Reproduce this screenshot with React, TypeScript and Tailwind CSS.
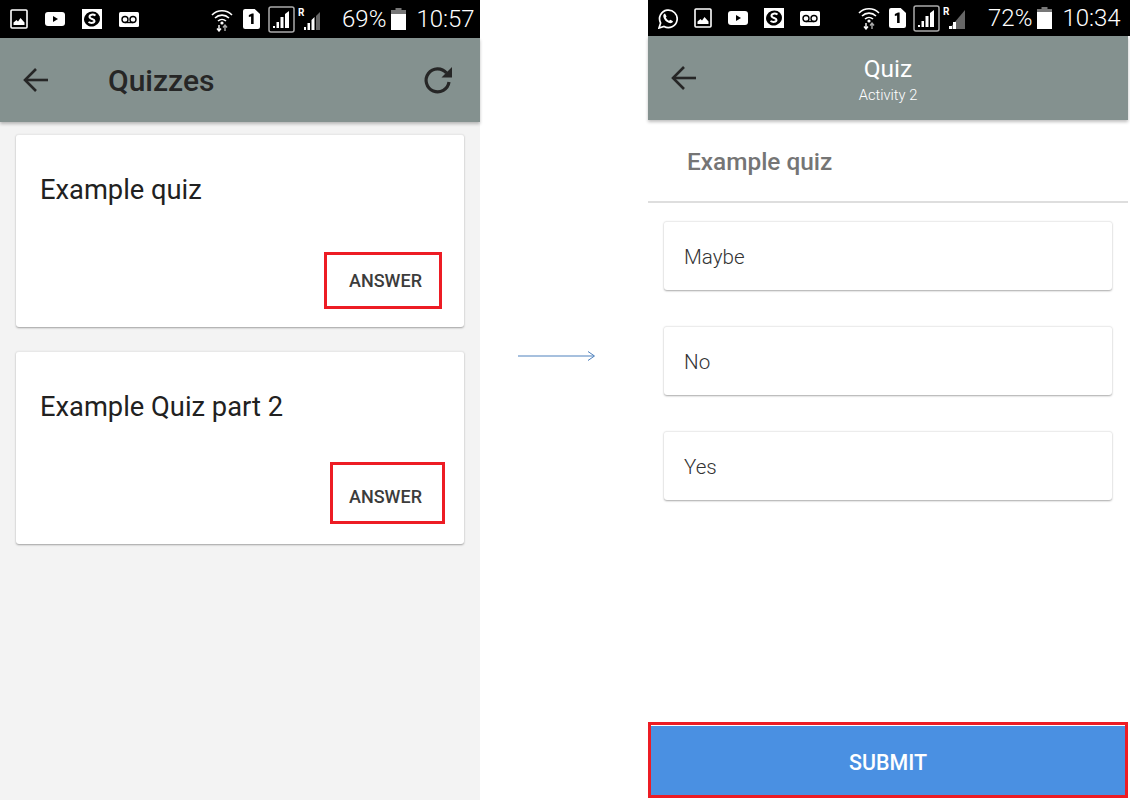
// App.tsx
import React from 'react'

const PictureIcon = () => (
  <svg width="18" height="20" viewBox="0 0 18 20">
    <rect x="1" y="1" width="16" height="18" rx="1" fill="#000" stroke="#fff" strokeWidth="1.6" />
    <path d="M3.5 16 L3.5 13.5 L6.5 11 L8 12.5 L10.5 9 L14.5 13.5 L14.5 16 Z" fill="#fff" />
  </svg>
)

const PlayIcon = () => (
  <svg width="20" height="14" viewBox="0 0 20 14">
    <rect x="0" y="0" width="20" height="14" rx="3" fill="#fff" />
    <path d="M8 4 L13 7 L8 10 Z" fill="#000" />
  </svg>
)

const SkypeIcon = () => (
  <svg width="20" height="20" viewBox="0 0 20 20">
    <rect width="20" height="20" fill="#fff" />
    <ellipse cx="10" cy="10" rx="8" ry="7.5" fill="#000" transform="rotate(-20 10 10)" />
    <path d="M13.5 6.5 C11 4.8 7.5 5.5 7.5 7.8 C7.5 10.5 12.5 9.5 12.5 12 C12.5 14 9 14.5 6.5 13" fill="none" stroke="#fff" strokeWidth="2" />
  </svg>
)

const VoicemailIcon = () => (
  <svg width="20" height="15" viewBox="0 0 20 15">
    <rect width="20" height="15" rx="1.5" fill="#fff" />
    <circle cx="6" cy="7.5" r="3" fill="none" stroke="#000" strokeWidth="1.4" />
    <circle cx="14" cy="7.5" r="3" fill="none" stroke="#000" strokeWidth="1.4" />
    <path d="M6 10.5 H14" stroke="#000" strokeWidth="1.4" />
  </svg>
)

const WhatsappIcon = () => (
  <svg width="20" height="21" viewBox="0 0 20 21">
    <path d="M1 20 L2.6 15 A8.8 8.8 0 1 1 6 18.5 Z" fill="none" stroke="#fff" strokeWidth="1.7" />
    <path d="M7 5.5 L8.6 8.4 L7.8 9.6 C8.6 11.2 9.6 12.2 11 12.8 L12.4 11.8 L15 13.2 C14.4 15.2 12.6 15.6 10.6 14.8 C8 13.8 6 11.6 5.4 9 C5 7.4 5.6 6 7 5.5 Z" fill="#fff" />
  </svg>
)

const WifiIcon = () => (
  <svg width="22" height="24" viewBox="0 0 22 24">
    <path d="M1 7 A14 14 0 0 1 21 7" fill="none" stroke="#fff" strokeWidth="1.6" />
    <path d="M4 10 A10 10 0 0 1 18 10" fill="none" stroke="#fff" strokeWidth="1.6" />
    <path d="M7 13 A6 6 0 0 1 15 13" fill="none" stroke="#fff" strokeWidth="1.6" />
    <circle cx="11" cy="15" r="1.6" fill="#fff" />
    <path d="M8 17 V23 M6 20.5 L8 23 L10 20.5" fill="none" stroke="#fff" strokeWidth="1.4" />
    <path d="M14 23 V17 M12 19.5 L14 17 L16 19.5" fill="none" stroke="#aaa" strokeWidth="1.4" />
  </svg>
)

const SimIcon = () => (
  <svg width="17" height="20" viewBox="0 0 16 20" preserveAspectRatio="none">
    <path d="M0 2 Q0 0 2 0 L11 0 L16 5 L16 18 Q16 20 14 20 L2 20 Q0 20 0 18 Z" fill="#fff" />
    <path d="M5.5 6 L8.5 4.5 L10 4.5 L10 15 L7.6 15 L7.6 7.5 L5.5 8 Z" fill="#000" />
  </svg>
)

const BoxedSignal = () => (
  <svg width="27" height="27" viewBox="0 0 27 27">
    <rect x="1" y="1" width="25" height="25" rx="2" fill="#000" stroke="#aaa" strokeWidth="1.5" />
    <path d="M5 22 H7 V20 H5 Z M8.5 22 H11 V16 H8.5 Z M12.5 22 H15.5 V11 H12.5 Z M17 22 H21 V5 L17 8 Z" fill="#fff" />
  </svg>
)

const RoamingSignal = ({ bars = 2 }: { bars?: number }) => (
  <svg width="24" height="24" viewBox="0 0 24 24">
    <text x="0" y="9" fill="#fff" fontSize="10" fontWeight="700" fontFamily="Roboto, sans-serif">R</text>
    {bars > 1 ? (
      <>
        <path d="M18 23 H22 V5 L18 9 Z" fill="#666" />
        <path d="M6 23 H8 V20 H6 Z M9.5 23 H12 V16 H9.5 Z M13.5 23 H16.5 V10 L13.5 13 Z" fill="#fff" />
      </>
    ) : (
      <>
        <path d="M22 4 L22 23 L6 23 Z" fill="#666" />
        <path d="M6 23 H9 V20 H6 Z M10 23 H13 V16 H10 Z" fill="#fff" />
      </>
    )}
  </svg>
)

const BatteryIcon = ({ level }: { level: number }) => (
  <svg width="15" height="22" viewBox="0 0 15 22">
    <path d="M4.5 0 H10.5 V2 H15 V22 H0 V2 H4.5 Z" fill="#777" />
    <path d={`M0 ${22 - level} H15 V22 H0 Z`} fill="#fff" />
  </svg>
)

const BackArrow = () => (
  <svg width="26" height="24" viewBox="0 0 26 24" fill="none" stroke="#262626" strokeWidth="2.6">
    <path d="M25 12 H2" />
    <path d="M13 1 L2 12 L13 23" />
  </svg>
)

const RefreshIcon = () => (
  <svg width="30" height="30" viewBox="0 0 30 30" fill="none">
    <path d="M23.5 8 A11.5 11.5 0 1 0 26 17" stroke="#262626" strokeWidth="3.2" />
    <path d="M29 2 V12.5 H18.5 Z" fill="#262626" />
  </svg>
)

const Answer = ({ className }: { className: string }) => (
  <button className={`flex items-center justify-center border-[3px] border-[#ed1c24] text-[18px] font-medium text-[#3c3c3c] ${className}`}>
    ANSWER
  </button>
)

const QuizCard = ({ title, buttonClass, titleClass }: { title: string; buttonClass: string; titleClass: string }) => (
  <div className="mx-4 flex h-[193px] flex-col rounded-[3px] border-t border-[#e8e8e8] bg-white shadow-[0_1px_2px_rgba(0,0,0,0.35)]">
    <div className={`pl-6 text-[27.3px] leading-[32px] text-[#212121] ${titleClass}`}>{title}</div>
    {/* button row pinned to the card's lower edge */}
    <div className="flex flex-1 items-end justify-end">
      <Answer className={buttonClass} />
    </div>
  </div>
)

const Option = ({ label }: { label: string }) => (
  <div className="mx-4 flex h-[69px] items-center rounded-[3px] border-t border-[#ececec] bg-white pl-5 pt-[2px] text-[20.6px] font-light text-[#333] shadow-[0_1px_2px_rgba(0,0,0,0.35)]">
    {label}
  </div>
)

const App: React.FC = () => {
  return (
    <div className="flex h-[800px] w-[1130px] bg-white font-['Roboto',sans-serif]">
      {/* left phone */}
      <div className="flex h-[800px] w-[480px] flex-col bg-[#f3f3f3]">
        <div className="flex h-[38px] items-center bg-black pl-[10px] text-white">
          <div className="flex items-center gap-[17px]">
            <PictureIcon />
            <PlayIcon />
            <SkypeIcon />
            <VoicemailIcon />
          </div>
          <div className="ml-[72px] mt-[2px]"><WifiIcon /></div>
          <div className="ml-[10px]"><SimIcon /></div>
          <div className="ml-[8px]"><BoxedSignal /></div>
          <div className="ml-[3px]"><RoamingSignal /></div>
          <span className="ml-[20px] text-[24px] font-light">69%</span>
          <div className="ml-[5px]"><BatteryIcon level={16} /></div>
          <span className="ml-[10px] text-[24px] font-light">10:57</span>
        </div>
        <div className="flex h-[84px] items-center bg-[#84918f] pl-[23px] shadow-[0_2px_3px_rgba(0,0,0,0.25)]">
          <BackArrow />
          <h1 className="ml-[59px] text-[30px] font-medium text-[#262626]">Quizzes</h1>
          <div className="ml-auto mr-[27px]"><RefreshIcon /></div>
        </div>
        <div className="mt-3 flex flex-col gap-6">
          <QuizCard title="Example quiz" titleClass="pt-[39px]" buttonClass="mb-[18px] mr-[22px] h-[57px] w-[118px] pb-[1px] pl-[5px]" />
          <QuizCard title="Example Quiz part 2" titleClass="pt-[39px]" buttonClass="mb-[20px] mr-[19px] h-[62px] w-[115px] pr-[4px] pt-[6px]" />
        </div>
      </div>

      {/* arrow between the two screens */}
      <div className="flex w-[168px] items-center pb-[88px] pl-[38px]">
        <svg width="78" height="10" viewBox="0 0 78 10" fill="none" stroke="#4f81bd">
          <path d="M0 5 H76" />
          <path d="M70 0.5 L76.5 5 L70 9.5" />
        </svg>
      </div>

      {/* right phone */}
      <div className="flex h-[800px] w-[482px] flex-col bg-white">
        <div className="flex h-[36px] items-center bg-black pl-[10px] text-white">
          <div className="flex items-center gap-[16px]">
            <WhatsappIcon />
            <PictureIcon />
            <PlayIcon />
            <SkypeIcon />
            <VoicemailIcon />
          </div>
          <div className="ml-[38px]"><WifiIcon /></div>
          <div className="ml-[9px]"><SimIcon /></div>
          <div className="ml-[7px]"><BoxedSignal /></div>
          <div className="ml-[3px]"><RoamingSignal bars={1} /></div>
          <span className="ml-[21px] text-[24px] font-light">72%</span>
          <div className="ml-[5px]"><BatteryIcon level={17} /></div>
          <span className="ml-[10px] text-[24px] font-light">10:34</span>
        </div>
        <div className="relative flex h-[84px] w-[480px] items-center bg-[#84918f] pl-[23px] shadow-[0_2px_3px_rgba(0,0,0,0.25)]">
          <BackArrow />
          <div className="ml-[-49px] flex flex-1 flex-col items-center pt-[2px] text-white">
            <span className="mb-[1px] text-[24.5px] leading-[30px]">Quiz</span>
            <span className="text-[14.7px] font-light leading-[20px]">Activity 2</span>
          </div>
        </div>
        <div className="flex h-[83px] w-[480px] items-center border-b-2 border-[#dedede] pl-[39px] pt-[4px] text-[24.4px] font-medium text-[#757575]">
          Example quiz
        </div>
        <div className="mt-[18px] flex w-[480px] flex-col gap-9">
          <Option label="Maybe" />
          <Option label="No" />
          <Option label="Yes" />
        </div>
        <div className="flex-1" />
        <button className="mb-[2px] h-[76px] w-[480px] border-[3px] border-[#ed1c24] bg-[#4a90e2] pt-[7px] text-[21.4px] font-medium text-white shadow-[inset_0_1px_0_#fff]">
          SUBMIT
        </button>
      </div>
    </div>
  )
}

export default App
